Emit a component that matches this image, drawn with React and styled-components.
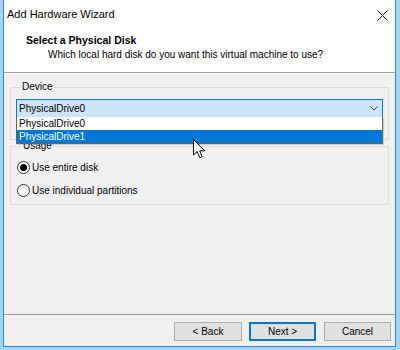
import React from 'react';
import styled, { createGlobalStyle } from 'styled-components';

const GlobalStyle = createGlobalStyle`
  html, body {
    margin: 0;
    padding: 0;
  }
  body {
    font-family: "Liberation Sans", Arial, sans-serif;
    font-size: 10px;
    color: #000;
  }
`;

const Screen = styled.div`
  width: 400px;
  height: 350px;
  box-sizing: border-box;
  padding: 0 4px 3px 3px;
  background: #a7d3f3;
  display: flex;
`;

const Window = styled.div`
  position: relative;
  flex: 1;
  display: flex;
  flex-direction: column;
  background: #f0f0f0;
  border: 1px solid #2b88d8;
  border-top: none;
`;

const TitleBar = styled.div`
  height: 28px;
  flex-shrink: 0;
  display: flex;
  align-items: center;
  justify-content: space-between;
  padding: 0 7px 0 3px;
  background: #fff;
  font-size: 11px;
`;

const CloseIcon = styled.svg`
  width: 11px;
  height: 11px;
  margin-top: 2px;
`;

const Header = styled.div`
  height: 45px;
  flex-shrink: 0;
  box-sizing: border-box;
  background: #fff;
  padding: 5px 0 0 22px;
  border-bottom: 1px solid #a0a0a0;
  box-shadow: 0 1px 0 #fff;
`;

const HeaderTitle = styled.div`
  font-weight: bold;
  font-size: 10.5px;
  line-height: 14px;
`;

const HeaderSub = styled.div`
  padding-left: 22px;
  line-height: 16px;
`;

const Body = styled.div`
  flex: 1;
  padding: 8px 6px 0;
`;

const Group = styled.fieldset`
  margin: 0;
  border: 1px solid #dcdcdc;
  padding: ${p => p.$padding};
  min-width: 0;
`;

const Legend = styled.legend`
  margin-left: 5px;
  padding: 0 1px;
  line-height: 12px;
`;

const Combo = styled.div`
  position: relative;
  height: 19px;
  box-sizing: border-box;
  display: flex;
  align-items: center;
  justify-content: space-between;
  padding: 0 4px 0 2px;
  background: #cce4f7;
  border: 1px solid #0078d7;
`;

const Chevron = styled.svg`
  width: 8px;
  height: 5px;
`;

const DropList = styled.div`
  position: absolute;
  left: -1px;
  right: -1px;
  top: 100%;
  background: #fff;
  border: 1px solid #646464;
  border-top: none;
  box-shadow: 1px 1px 0 rgba(0, 0, 0, 0.15);
  z-index: 2;
`;

const Option = styled.div`
  height: 13px;
  line-height: 13px;
  padding-left: 2px;
  background: ${p => (p.$selected ? '#0078d7' : '#fff')};
  color: ${p => (p.$selected ? '#fff' : '#000')};
`;

const RadioRow = styled.label`
  height: 23px;
  display: flex;
  align-items: center;
  gap: 2px;
`;

const RadioDot = styled.span`
  width: 13px;
  height: 13px;
  box-sizing: border-box;
  border-radius: 50%;
  border: 1px solid #333;
  background: #fff;
  display: flex;
  align-items: center;
  justify-content: center;
  &::after {
    content: '';
    width: 7px;
    height: 7px;
    border-radius: 50%;
    background: ${p => (p.$checked ? '#000' : 'transparent')};
  }
`;

const Footer = styled.div`
  height: 32px;
  flex-shrink: 0;
  box-sizing: border-box;
  display: flex;
  align-items: flex-start;
  justify-content: flex-end;
  gap: 7px;
  padding: 7px 4px 0 0;
  border-top: 1px solid #a0a0a0;
`;

const Button = styled.button`
  width: ${p => p.$width || 67}px;
  height: 19px;
  box-sizing: border-box;
  padding: 0;
  margin: 0 ${p => p.$after || 0}px 0 0;
  font: inherit;
  color: #000;
  background: #e1e1e1;
  border: ${p => (p.$default ? '2px solid #0078d7' : '1px solid #adadad')};
`;

const Cursor = styled.svg`
  position: absolute;
  left: 189px;
  top: 139px;
  width: 13px;
  height: 20px;
  z-index: 3;
`;

const App = () => (
  <>
    <GlobalStyle />
    <Screen>
      <Window>
        <TitleBar>
          <span>Add Hardware Wizard</span>
          <CloseIcon viewBox="0 0 11 11">
            <path d="M0.5 0.5 L10.5 10.5 M10.5 0.5 L0.5 10.5" stroke="#222" strokeWidth="1" fill="none" />
          </CloseIcon>
        </TitleBar>
        <Header>
          <HeaderTitle>Select a Physical Disk</HeaderTitle>
          <HeaderSub>Which local hard disk do you want this virtual machine to use?</HeaderSub>
        </Header>
        <Body>
          <Group $padding="6px 5px 21px">
            <Legend>Device</Legend>
            <Combo>
              <span>PhysicalDrive0</span>
              <Chevron viewBox="0 0 8 5">
                <path d="M0.5 0.5 L4 4 L7.5 0.5" stroke="#444" strokeWidth="1" fill="none" />
              </Chevron>
              <DropList>
                <Option>PhysicalDrive0</Option>
                <Option $selected>PhysicalDrive1</Option>
              </DropList>
            </Combo>
          </Group>
          <Group $padding="4px 6px 2px">
            <Legend>Usage</Legend>
            <RadioRow>
              <RadioDot $checked />
              Use entire disk
            </RadioRow>
            <RadioRow>
              <RadioDot />
              Use individual partitions
            </RadioRow>
          </Group>
        </Body>
        <Footer>
          <Button $width={68}>&lt; Back</Button>
          <Button $default $after={1}>Next &gt;</Button>
          <Button>Cancel</Button>
        </Footer>
        <Cursor viewBox="0 0 13 20">
          <path
            d="M0.5 0.5 L0.5 16 L4.2 12.6 L6.8 18.8 L9.2 17.8 L6.7 11.8 L11.6 11.8 Z"
            fill="#fff"
            stroke="#000"
            strokeWidth="1"
            strokeLinejoin="round"
          />
        </Cursor>
      </Window>
    </Screen>
  </>
);

export default App;
